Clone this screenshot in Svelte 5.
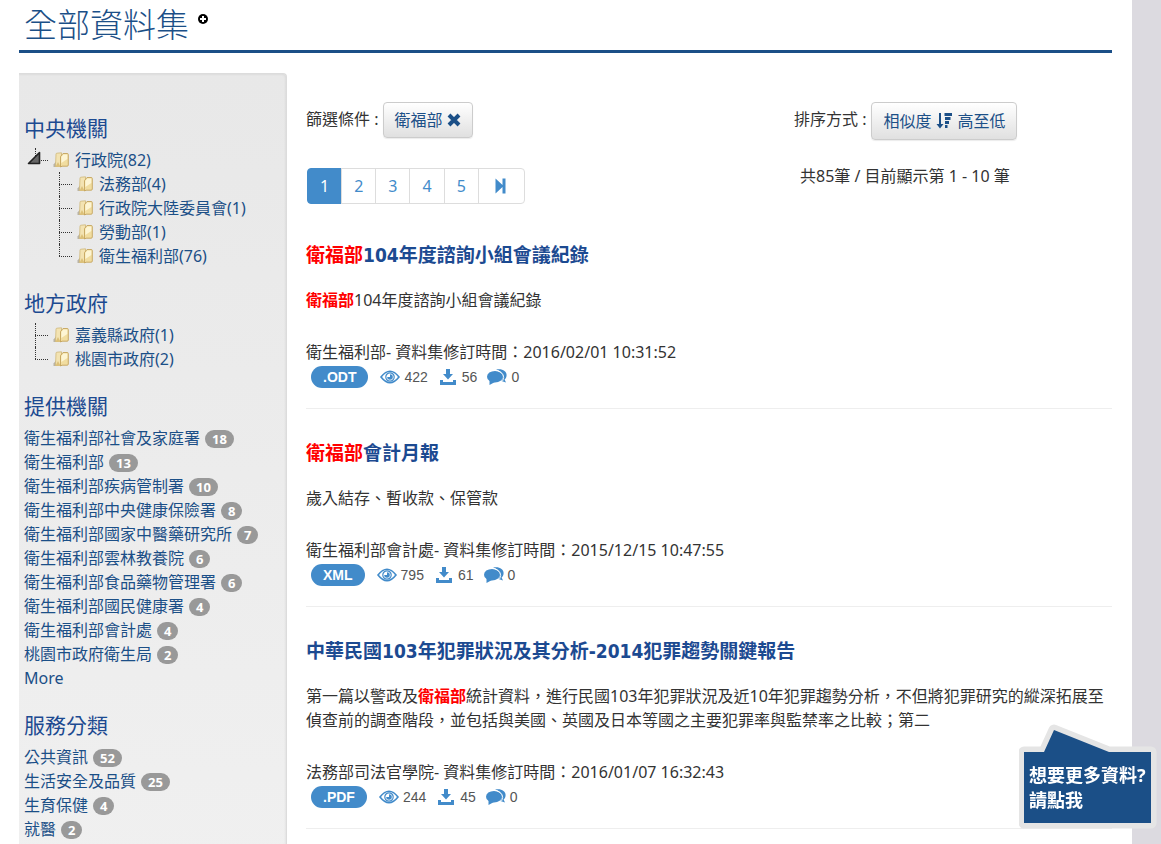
<script>
  const central = [
    ['法務部', 4],
    ['行政院大陸委員會', 1],
    ['勞動部', 1],
    ['衛生福利部', 76],
  ];
  const local = [
    ['嘉義縣政府', 1],
    ['桃園市政府', 2],
  ];
  const providers = [
    ['衛生福利部社會及家庭署', 18],
    ['衛生福利部', 13],
    ['衛生福利部疾病管制署', 10],
    ['衛生福利部中央健康保險署', 8],
    ['衛生福利部國家中醫藥研究所', 7],
    ['衛生福利部雲林教養院', 6],
    ['衛生福利部食品藥物管理署', 6],
    ['衛生福利部國民健康署', 4],
    ['衛生福利部會計處', 4],
    ['桃園市政府衛生局', 2],
  ];
  const services = [
    ['公共資訊', 52],
    ['生活安全及品質', 25],
    ['生育保健', 4],
    ['就醫', 2],
  ];
  const keyword = '衛福部';
  const datasets = [
    {
      title: '衛福部104年度諮詢小組會議紀錄',
      text: '衛福部104年度諮詢小組會議紀錄',
      org: '衛生福利部', time: '2016/02/01 10:31:52',
      format: '.ODT', views: 422, downloads: 56, comments: 0,
    },
    {
      title: '衛福部會計月報',
      text: '歲入結存、暫收款、保管款',
      org: '衛生福利部會計處', time: '2015/12/15 10:47:55',
      format: 'XML', views: 795, downloads: 61, comments: 0,
    },
    {
      title: '中華民國103年犯罪狀況及其分析-2014犯罪趨勢關鍵報告',
      text: '第一篇以警政及衛福部統計資料，進行民國103年犯罪狀況及近10年犯罪趨勢分析，不但將犯罪研究的縱深拓展至偵查前的調查階段，並包括與美國、英國及日本等國之主要犯罪率與監禁率之比較；第二',
      org: '法務部司法官學院', time: '2016/01/07 16:32:43',
      format: '.PDF', views: 244, downloads: 45, comments: 0,
    },
  ];
  const split = (s) => s.split(new RegExp(`(${keyword})`)).filter(Boolean);
</script>

{#snippet marked(s)}{#each split(s) as part}{#if part === keyword}<em>{part}</em>{:else}{part}{/if}{/each}{/snippet}

{#snippet folder()}
  <svg class="folder" viewBox="0 0 16 16" aria-hidden="true">
    <path d="M0.5 15 L0.5 12.5 L3 9.5 L5 15 Z" fill="#b9b3a4" />
    <path d="M3 2.2 Q3 1.2 4 1.2 L8.5 0.8 V14.5 H2.5 Z" fill="#f3e3b2" stroke="#cfb778" stroke-width="0.8" />
    <path d="M2.5 14.8 L5 10 L7.5 14.8 Z" fill="#dcc078" />
    <path d="M7.5 4.5 L10 1.5 H14.2 Q15.3 1.5 15.3 2.6 V13 Q15.3 14.2 14.2 14.2 H9 L7.5 15 Z" fill="#f1dda0" stroke="#c4a45c" stroke-width="0.9" />
    <path d="M8.3 5 L10.3 2.4 H14.3 V7 L8.3 11 Z" fill="#fdf5d4" />
  </svg>
{/snippet}

{#snippet counts(rows)}
  <ul class="counts">
    {#each rows as [name, n]}
      <li><a href="#list">{name}</a><span class="badge">{n}</span></li>
    {/each}
  </ul>
{/snippet}

<div class="page" lang="zh-Hant">
  <header>
    <h1>全部資料集</h1>
    <svg class="plus" viewBox="0 0 10 10" aria-hidden="true">
      <circle cx="5" cy="5" r="5" fill="#000" />
      <path d="M5 2V8M2 5H8" stroke="#fff" stroke-width="2" />
    </svg>
  </header>

  <div class="columns">
    <aside>
      <section>
        <h2>中央機關</h2>
        <ul class="tree">
          <li>
            <svg class="toggle" viewBox="0 0 14 14" aria-hidden="true">
              <path d="M1.5 12.5 L12.5 1.5 V12.5 Z" fill="#666" stroke="#222" stroke-width="1.6" stroke-linejoin="round" />
            </svg>
            <a href="#list">{@render folder()}行政院(82)</a>
            <ul class="tree">
              {#each central as [name, n]}
                <li><a href="#list">{@render folder()}{name}({n})</a></li>
              {/each}
            </ul>
          </li>
        </ul>
      </section>
      <section>
        <h2>地方政府</h2>
        <ul class="tree">
          {#each local as [name, n]}
            <li><a href="#list">{@render folder()}{name}({n})</a></li>
          {/each}
        </ul>
      </section>
      <section>
        <h2>提供機關</h2>
        {@render counts(providers)}
        <a href="#list">More</a>
      </section>
      <section>
        <h2>服務分類</h2>
        {@render counts(services)}
      </section>
    </aside>

    <main id="list">
      <div class="tools">
        <div class="filter">
          <span>篩選條件 :</span>
          <button type="button">衛福部
            <svg width="14" height="14" viewBox="0 0 14 14" aria-hidden="true">
              <path d="M2 2 L12 12 M12 2 L2 12" stroke="currentColor" stroke-width="4" />
            </svg>
          </button>
        </div>
        <div class="sort">
          <span>排序方式 :</span>
          <button type="button">相似度
            <svg width="16" height="16" viewBox="0 0 16 16" aria-hidden="true">
              <path d="M3 0H5V11H7.5L4 15.5L0.5 11H3Z M8.5 0H16V3H8.5Z M9 4H14.5V7H9Z M9 8H13V11H9Z M9 12H11.5V15H9Z" fill="currentColor" />
            </svg>
            高至低</button>
        </div>
        <nav aria-label="分頁">
          <a class="current" href="#list">1</a>
          {#each [2, 3, 4, 5] as n}<a href="#list">{n}</a>{/each}
          <a class="last" href="#list" aria-label="末頁">
            <svg width="11" height="16" viewBox="0 0 11 16" aria-hidden="true">
              <path d="M0.5 0.5 L7.5 7 V0.5 H10.5 V15.5 H7.5 V9 L0.5 15.5 Z" fill="currentColor" />
            </svg>
          </a>
        </nav>
        <p class="total">共85筆 / 目前顯示第 1 - 10 筆</p>
      </div>

      {#each datasets as d}
        <article>
          <h3><a href="#list">{@render marked(d.title)}</a></h3>
          <p class="text">{@render marked(d.text)}</p>
          <p>{d.org}- 資料集修訂時間：{d.time}</p>
          <div class="stats">
            <a class="format" href="#list">{d.format}</a>
            <span class="stat">
              <svg width="20" height="14" viewBox="0 0 20 14" aria-hidden="true">
                <path d="M1 7 Q10 -4.5 19 7 Q10 18.5 1 7 Z" fill="none" stroke="currentColor" stroke-width="1.6" />
                <circle cx="10" cy="7" r="4.2" fill="none" stroke="currentColor" stroke-width="1.2" />
                <path d="M10 7 V4.2 A2.8 2.8 0 1 1 7.2 7 Z" fill="currentColor" />
              </svg>
              {d.views}
            </span>
            <span class="stat down">
              <svg width="16" height="16" viewBox="0 0 16 16" aria-hidden="true">
                <path d="M6 0H10V5H13L8 10.5L3 5H6Z M0 11H3V13H13V11H16V16H0Z" fill="currentColor" />
              </svg>
              {d.downloads}
            </span>
            <span class="stat talk">
              <svg width="20" height="16" viewBox="0 0 20 16" aria-hidden="true">
                <path d="M9 0.6 C15 -0.8 19.6 2 19.6 6 C19.6 8 18.8 9.5 17.6 10.5 L19 13.4 L14.5 12 C17.5 7 16 2.5 9 0.6 Z" fill="currentColor" />
                <ellipse cx="8" cy="7.7" rx="8" ry="5.8" fill="currentColor" />
                <path d="M2.5 10 L2.5 16 L8 13 Z" fill="currentColor" />
                <path d="M10.5 1.6 Q19.3 5 15.6 12" fill="none" stroke="#fff" stroke-width="0.9" />
              </svg>
              {d.comments}
            </span>
          </div>
        </article>
      {/each}
    </main>
  </div>

  <a class="callout" href="#list">
    <svg viewBox="0 0 138 105" aria-hidden="true">
      <path d="M5 28H25L35 6L90 28H132V99H5Z" fill="#e5e5e5" stroke="#e5e5e5" stroke-width="11" stroke-linejoin="round" />
      <path d="M5 28H25L35 6L90 28H132V99H5Z" fill="#1b4f87" />
    </svg>
    <span>想要更多資料?<br />請點我</span>
  </a>
</div>

<style>
  :global(html) { height: 100%; overflow: hidden; }
  :global(body) { margin: 0; height: 100%; overflow: hidden; background: #dcdae0; }
  :global(#app) { height: 100%; }
  .page {
    box-sizing: border-box;
    min-height: 100%;
    margin-right: 29px;
    padding: 0 20px 0 19px;
    display: flex;
    flex-direction: column;
    background: #fff;
    color: #333;
    font: 400 16px/24px "Noto Sans", "Noto Sans CJK TC", sans-serif;
  }
  h1, h2, h3, p, ul { margin: 0; padding: 0; }
  ul { list-style: none; }
  a { color: #1b4f87; text-decoration: none; }
  header {
    display: flex;
    gap: 9px;
    height: 50px;
    padding-left: 5px;
    border-bottom: 3px solid #1b4f87;
  }
  h1 { color: #1b4f87; font-size: 33px; font-weight: 300; line-height: 50px; }
  .plus { width: 10px; height: 10px; margin-top: 14px; }
  .columns {
    flex: 1;
    display: grid;
    grid-template-columns: 268px 1fr;
    gap: 19px;
    margin-top: 20px;
  }
  aside {
    box-sizing: border-box;
    padding: 42px 5px 0;
    border: solid #dcdcdc;
    border-width: 1px 1px 0 0;
    border-radius: 0 4px 0 0;
    background: linear-gradient(#e8e8e8, #f0f0f0 800px);
    box-shadow: inset -1px 1px 2px rgba(0, 0, 0, 0.05);
  }
  section + section { margin-top: 23px; }
  h2 { margin-bottom: 8px; color: #1c4a91; font-size: 21px; font-weight: 400; line-height: 24px; }
  .badge {
    display: inline-block;
    margin-left: 5px;
    padding: 0 7px;
    border-radius: 9px;
    background: #999;
    color: #fff;
    font: 700 13px/18px "Open Sans", sans-serif;
  }
  .tree li { position: relative; padding-left: 24px; }
  .tree a { display: flex; align-items: center; gap: 6px; padding-left: 5px; white-space: nowrap; }
  .tree li::before, .tree li::after { content: ""; position: absolute; left: 11px; top: 0; }
  .tree li::before { height: 24px; border-left: 1px dotted #333; }
  .tree li:last-child::before { height: 12px; }
  .tree li::after { top: 12px; width: 13px; border-top: 1px dotted #333; }
  .folder { width: 16px; height: 16px; }
  .toggle { position: absolute; z-index: 1; left: 3px; top: 3px; width: 14px; height: 14px; }
  main { padding-top: 29px; }
  .tools {
    display: grid;
    grid-template-columns: 488fr 318fr;
    row-gap: 28px;
  }
  .filter, .sort { display: flex; align-items: start; gap: 5px; height: 38px; }
  .filter > span, .sort > span { padding-top: 5px; }
  button {
    display: flex;
    align-items: center;
    gap: 5px;
    height: 36px;
    padding: 0 11px 0 10px;
    border: 1px solid #ccc;
    border-radius: 4px;
    background: linear-gradient(#fff, #e0e0e0);
    box-shadow: 0 1px 1px rgba(0, 0, 0, 0.08);
    color: #1b4f87;
    font: inherit;
  }
  .sort button { height: 38px; padding: 0 11px; }
  nav { display: flex; padding-left: 1px; }
  nav a {
    box-sizing: border-box;
    height: 36px;
    padding: 5px 12px;
    margin-left: -1px;
    border: 1px solid #ddd;
    color: #428bca;
  }
  nav .current { margin: 0; border-color: #428bca; border-radius: 4px 0 0 4px; background: #428bca; color: #fff; }
  nav .last { display: flex; align-items: center; padding: 0 18px 0 16px; border-radius: 0 4px 4px 0; }
  .total { padding-left: 6px; margin-top: -4px; }
  article { padding: 32px 0 20px; border-bottom: 1px solid #eee; }
  .tools + article { padding-top: 39px; }
  h3 {
    margin-bottom: 21px;
    font: 700 19px/24px "DejaVu Sans Condensed", "Noto Sans CJK TC", sans-serif;
  }
  h3 a { color: #1c4a91; }
  em { color: #f00; font-style: normal; font-weight: 700; }
  .text { margin-bottom: 28px; }
  .stats { display: flex; align-items: center; gap: 12px; margin-top: 2px; padding-left: 5px; }
  .format {
    padding: 0 12px;
    border-radius: 11px;
    background: #428bca;
    color: #fff;
    font: 700 14px/22px "Liberation Sans", sans-serif;
  }
  .stat { display: flex; align-items: center; gap: 4px; color: #555; font: 400 14px/22px "Liberation Sans", sans-serif; }
  .stat svg { color: #428bca; }
  .stat.down { gap: 6px; }
  .stat.talk { margin-left: -2px; }
  .callout { position: fixed; right: 4px; bottom: 15px; width: 138px; height: 105px; }
  .callout svg { display: block; width: 100%; }
  .callout span {
    position: absolute;
    left: 10px;
    top: 39px;
    color: #fff;
    font-size: 18px;
    font-weight: 700;
    line-height: 25px;
    white-space: nowrap;
  }
</style>
